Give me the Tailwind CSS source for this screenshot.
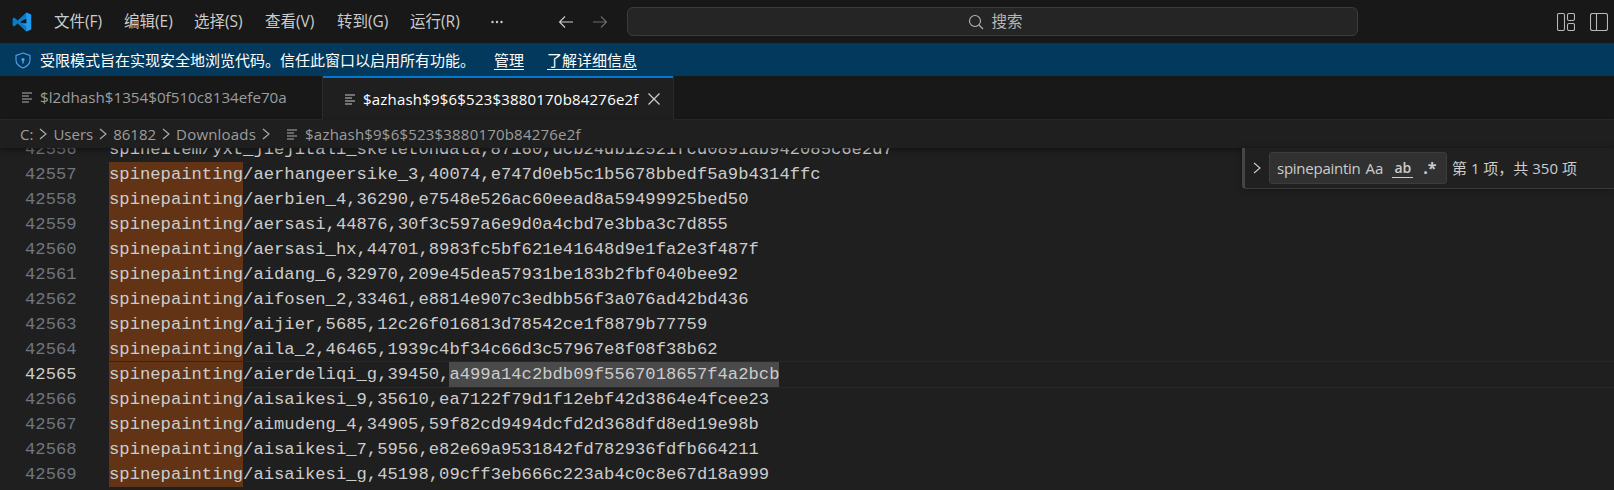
<!DOCTYPE html>
<html lang="zh-CN">
  <head>
    <meta charset="UTF-8" />
    <title>$azhash$9$6$523$3880170b84276e2f</title>
    <script src="https://cdn.jsdelivr.net/npm/@tailwindcss/browser@4"></script>
  </head>
  <body class="bg-[#1f1f1f] overflow-hidden font-['Open_Sans','Noto_Sans_CJK_SC',sans-serif]">
    <div class="relative w-[1614px] h-[490px] flex flex-col overflow-hidden">
      <!-- title bar -->
      <header class="h-[44px] shrink-0 bg-[#181818] border-b border-[#2b2b2b] flex items-center text-[15.5px] text-[#cccccc]">
        <svg class="ml-[12px] w-[20px] h-[20px]" viewBox="0 0 100 100">
          <path fill="#1f9cf0" d="M72 2 96 13v74L72 98 34 56l38 0V32L34 50z" />
          <path fill="#0a7cc7" d="M72 2 28 42 11 28 3 32v36l8 4 17-14 44 40V72L42 50l30-22z" />
        </svg>
        <nav class="flex ml-[12px]">
          <span class="w-[70px] pl-[10px]">文件(F)</span>
          <span class="w-[70px] pl-[10px]">编辑(E)</span>
          <span class="w-[71px] pl-[10px]">选择(S)</span>
          <span class="w-[72px] pl-[10px]">查看(V)</span>
          <span class="w-[73px] pl-[10px]">转到(G)</span>
          <span class="w-[80px] pl-[10px]">运行(R)</span>
        </nav>
        <svg class="w-[14px] h-[14px] ml-[10px]" viewBox="0 0 14 14" fill="#cccccc">
          <circle cx="2.5" cy="7" r="1.2" /><circle cx="7" cy="7" r="1.2" /><circle cx="11.5" cy="7" r="1.2" />
        </svg>
        <svg class="w-[16px] h-[16px] ml-[54px]" viewBox="0 0 16 16" fill="none" stroke="#cccccc" stroke-width="1.1">
          <path d="M15 8H1.5M7 2.5 1.5 8 7 13.5" />
        </svg>
        <svg class="w-[16px] h-[16px] ml-[18px]" viewBox="0 0 16 16" fill="none" stroke="#6b6b6b" stroke-width="1.1">
          <path d="M1 8h13.5M9 2.5 14.5 8 9 13.5" />
        </svg>
        <div class="w-[731px] h-[29px] ml-[19px] pl-[6px] rounded-[6px] bg-[#252525] border border-[#3c3c3c] flex items-center justify-center text-[#b5b5b5]">
          <svg class="w-[16px] h-[16px] mr-[7px]" viewBox="0 0 16 16" fill="none" stroke="#b5b5b5" stroke-width="1.1">
            <circle cx="7" cy="7" r="5.5" /><path d="m11 11 4 4" />
          </svg>
          <span class="text-[15.5px]">搜索</span>
        </div>
        <svg class="w-[18px] h-[18px] ml-auto" viewBox="0 0 18 18" fill="none" stroke="#b8b8b8" stroke-width="1.1">
          <rect x="0.5" y="0.5" width="7" height="17" rx="1.5" />
          <rect x="10.5" y="0.5" width="7" height="7" rx="1.5" />
          <rect x="10.5" y="10.5" width="7" height="7" rx="1.5" />
        </svg>
        <svg class="w-[18px] h-[18px] ml-[15px] mr-[6px]" viewBox="0 0 18 18" fill="none" stroke="#b8b8b8" stroke-width="1.1">
          <rect x="0.5" y="0.5" width="17" height="17" rx="2" /><path d="M6.5 0.5v17" />
        </svg>
      </header>

      <!-- restricted mode banner -->
      <div class="h-[32px] shrink-0 bg-[#04395e] flex items-center text-white text-[15px]">
        <svg class="ml-[15px] w-[16px] h-[17px]" viewBox="0 0 16 17" fill="none" stroke="#4da3f0" stroke-width="1.1">
          <path d="M8 1 15 3.5V8c0 4-3 6.5-7 8-4-1.5-7-4-7-8V3.5z" />
          <circle cx="8" cy="7.5" r="1.6" fill="#4da3f0" stroke="none" />
          <path d="M8 8v3.5" stroke-width="1.4" />
        </svg>
        <span class="ml-[9px] w-[454px]">受限模式旨在实现安全地浏览代码。信任此窗口以启用所有功能。</span>
        <span class="underline underline-offset-3">管理</span>
        <span class="underline underline-offset-3 ml-[23px]">了解详细信息</span>
      </div>

      <!-- tabs -->
      <div class="h-[44px] shrink-0 bg-[#181818] flex text-[15.2px]">
        <div class="w-[323px] flex items-center border-r border-b border-[#2b2b2b] text-[#9d9d9d]">
          <svg class="ml-[22px] w-[11px] h-[11px]" viewBox="0 0 11 11" stroke="#b0b0b0" stroke-width="1.2">
            <path d="M0 1h10M0 4h7M0 7h10M0 10h7" />
          </svg>
          <span class="ml-[7px]">$l2dhash$1354$0f510c8134efe70a</span>
        </div>
        <div class="w-[350px] flex items-center bg-[#1f1f1f] border-t-2 border-[#0078d4] text-white text-[15px] tracking-[0.2px]">
          <svg class="ml-[22px] w-[11px] h-[11px]" viewBox="0 0 11 11" stroke="#c8c8c8" stroke-width="1.2">
            <path d="M0 1h10M0 4h7M0 7h10M0 10h7" />
          </svg>
          <span class="ml-[7px] w-[285px] whitespace-nowrap">$azhash$9$6$523$3880170b84276e2f</span>
          <svg class="w-[12px] h-[12px]" viewBox="0 0 12 12" stroke="#d0d0d0" stroke-width="1.2">
            <path d="m0.5 0.5 11 11M11.5 0.5l-11 11" />
          </svg>
        </div>
        <div class="flex-1 border-l border-b border-[#2b2b2b]"></div>
      </div>

      <!-- breadcrumbs -->
      <div class="relative z-10 h-[28px] shrink-0 bg-[#1f1f1f] flex items-center text-[15px] text-[#9d9d9d] pl-[20px] shadow-[0_2px_5px_rgba(0,0,0,0.45)]">
        <span>C:</span>
        <svg class="w-[8px] h-[12px] mx-[6px]" viewBox="0 0 8 12" fill="none" stroke="#b0b0b0" stroke-width="1.1"><path d="m1 1 6 5-6 5" /></svg>
        <span>Users</span>
        <svg class="w-[8px] h-[12px] mx-[6px]" viewBox="0 0 8 12" fill="none" stroke="#b0b0b0" stroke-width="1.1"><path d="m1 1 6 5-6 5" /></svg>
        <span>86182</span>
        <svg class="w-[8px] h-[12px] mx-[6px]" viewBox="0 0 8 12" fill="none" stroke="#b0b0b0" stroke-width="1.1"><path d="m1 1 6 5-6 5" /></svg>
        <span class="tracking-[0.2px]">Downloads</span>
        <svg class="w-[8px] h-[12px] mx-[6px]" viewBox="0 0 8 12" fill="none" stroke="#b0b0b0" stroke-width="1.1"><path d="m1 1 6 5-6 5" /></svg>
        <svg class="ml-[11px] w-[11px] h-[11px]" viewBox="0 0 11 11" stroke="#b0b0b0" stroke-width="1.2">
          <path d="M0 1h10M0 4h7M0 7h10M0 10h7" />
        </svg>
        <span class="ml-[7px] tracking-[0.2px]">$azhash$9$6$523$3880170b84276e2f</span>
      </div>

      <!-- editor -->
      <main class="flex-1 overflow-hidden bg-[#1f1f1f] font-['Liberation_Mono',monospace] text-[17.2px] leading-[25px] text-[#cccccc]">
        <div class="-mt-[11px]">
          <div class="flex h-[25px]"><span class="w-[109px] pl-[25px] text-[#6e7681]">42556</span><span>spineitem/yxt_jiejitali_skeletondata,87160,dcb24db12521fcd0891ab942085c6e2d7</span></div>
          <div class="flex h-[25px]"><span class="w-[109px] pl-[25px] text-[#6e7681]">42557</span><span class="bg-[#623315]">spinepainting</span><span>/aerhangeersike_3,40074,e747d0eb5c1b5678bbedf5a9b4314ffc</span></div>
          <div class="flex h-[25px]"><span class="w-[109px] pl-[25px] text-[#6e7681]">42558</span><span class="bg-[#623315]">spinepainting</span><span>/aerbien_4,36290,e7548e526ac60eead8a59499925bed50</span></div>
          <div class="flex h-[25px]"><span class="w-[109px] pl-[25px] text-[#6e7681]">42559</span><span class="bg-[#623315]">spinepainting</span><span>/aersasi,44876,30f3c597a6e9d0a4cbd7e3bba3c7d855</span></div>
          <div class="flex h-[25px]"><span class="w-[109px] pl-[25px] text-[#6e7681]">42560</span><span class="bg-[#623315]">spinepainting</span><span>/aersasi_hx,44701,8983fc5bf621e41648d9e1fa2e3f487f</span></div>
          <div class="flex h-[25px]"><span class="w-[109px] pl-[25px] text-[#6e7681]">42561</span><span class="bg-[#623315]">spinepainting</span><span>/aidang_6,32970,209e45dea57931be183b2fbf040bee92</span></div>
          <div class="flex h-[25px]"><span class="w-[109px] pl-[25px] text-[#6e7681]">42562</span><span class="bg-[#623315]">spinepainting</span><span>/aifosen_2,33461,e8814e907c3edbb56f3a076ad42bd436</span></div>
          <div class="flex h-[25px]"><span class="w-[109px] pl-[25px] text-[#6e7681]">42563</span><span class="bg-[#623315]">spinepainting</span><span>/aijier,5685,12c26f016813d78542ce1f8879b77759</span></div>
          <div class="flex h-[25px]"><span class="w-[109px] pl-[25px] text-[#6e7681]">42564</span><span class="bg-[#623315]">spinepainting</span><span>/aila_2,46465,1939c4bf34c66d3c57967e8f08f38b62</span></div>
          <div class="flex h-[25px]"><span class="w-[109px] pl-[25px] text-[#cccccc]">42565</span><div class="flex-1 flex shadow-[0_-1px_0_#282828,0_1px_0_#282828]"><span class="bg-[#623315]">spinepainting</span><span>/aierdeliqi_g,39450,</span><span class="bg-[#4a4a4a]">a499a14c2bdb09f5567018657f4a2bcb</span></div></div>
          <div class="flex h-[25px]"><span class="w-[109px] pl-[25px] text-[#6e7681]">42566</span><span class="bg-[#623315]">spinepainting</span><span>/aisaikesi_9,35610,ea7122f79d1f12ebf42d3864e4fcee23</span></div>
          <div class="flex h-[25px]"><span class="w-[109px] pl-[25px] text-[#6e7681]">42567</span><span class="bg-[#623315]">spinepainting</span><span>/aimudeng_4,34905,59f82cd9494dcfd2d368dfd8ed19e98b</span></div>
          <div class="flex h-[25px]"><span class="w-[109px] pl-[25px] text-[#6e7681]">42568</span><span class="bg-[#623315]">spinepainting</span><span>/aisaikesi_7,5956,e82e69a9531842fd782936fdfb664211</span></div>
          <div class="flex h-[25px]"><span class="w-[109px] pl-[25px] text-[#6e7681]">42569</span><span class="bg-[#623315]">spinepainting</span><span>/aisaikesi_g,45198,09cff3eb666c223ab4c0c8e67d18a999</span></div>
        </div>
      </main>

      <!-- find widget -->
      <div class="absolute z-20 left-[1242px] top-[148px] w-[372px] h-[41px] bg-[#202020] border-l-[3px] border-l-[#454545] border-b border-b-[#3a3a3a] rounded-bl-[4px] flex items-center text-[15px] text-[#cccccc] shadow-[0_0_6px_rgba(0,0,0,0.4)]">
        <svg class="ml-[8px] w-[8px] h-[12px]" viewBox="0 0 8 12" fill="none" stroke="#cccccc" stroke-width="1.1"><path d="m1 1 6 5-6 5" /></svg>
        <div class="ml-[8px] w-[178px] h-[32px] rounded-[3px] bg-[#313131] border border-[#3c3c3c] flex items-center pl-[7px]">
          <span class="tracking-[-0.25px]">spinepaintin</span>
          <span class="ml-[5px]">Aa</span>
          <span class="ml-[9px] text-[14px] font-semibold border-b border-[#cccccc] leading-[18px] px-[2px]">ab</span>
          <span class="ml-[10px] text-[16px] font-bold">.*</span>
        </div>
        <span class="ml-[5px]">第 1 项，共 350 项</span>
      </div>
    </div>
  </body>
</html>
